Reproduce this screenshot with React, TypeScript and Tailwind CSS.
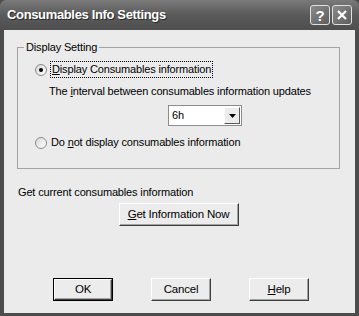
import React from 'react';

const font = { fontFamily: '"Liberation Sans", Arial, sans-serif' };

function Radio({ checked }: { checked?: boolean }) {
  return (
    <span className="w-[12px] h-[12px] rounded-full border border-[#8a8a8a] bg-gradient-to-br from-[#d8d8d8] to-white flex items-center justify-center shrink-0">
      {checked && <span className="w-[4px] h-[4px] rounded-full bg-black" />}
    </span>
  );
}

function Btn({ children, def, w = 'w-[60px]' }: { children: React.ReactNode; def?: boolean; w?: string }) {
  return (
    <div className={`${w} h-[23px] ${def ? 'border border-black' : ''}`}>
      <div className="w-full h-full border border-t-white border-l-white border-r-[#3f3f3f] border-b-[#3f3f3f] bg-[#ececec] shadow-[inset_-1px_-1px_0_#a3a3a3] flex items-center justify-center text-[11.5px] tracking-[-0.2px] text-black">
        {children}
      </div>
    </div>
  );
}

export default function App() {
  return (
    <div className="w-[359px] h-[316px] flex flex-col bg-[#4c4c4c] text-[11px] tracking-[-0.15px] text-black" style={font}>
      {/* title bar */}
      <div className="h-[30px] shrink-0 rounded-t-[6px] bg-gradient-to-b from-[#7a7a7a] via-[#5a5a5a] to-[#4e4e4e] flex items-center pl-[7px] pr-[7px]">
        <span className="text-white font-bold text-[13px] tracking-[-0.35px] [text-shadow:1px_1px_0_#2a2a2a] flex-1">
          Consumables Info Settings
        </span>
        <div className="flex gap-[2px]">
          <div className="w-[20px] h-[20px] rounded-[3px] border border-[#e0e0e0] bg-gradient-to-br from-[#8a8a8a] to-[#5e5e5e] flex items-center justify-center text-white font-bold text-[15px] leading-none">
            ?
          </div>
          <div className="w-[20px] h-[20px] rounded-[3px] border border-[#e0e0e0] bg-gradient-to-br from-[#8a8a8a] to-[#5e5e5e] flex items-center justify-center">
            <svg width="12" height="12" viewBox="0 0 12 12">
              <path d="M2 2 L10 10 M10 2 L2 10" stroke="white" strokeWidth="2.2" />
            </svg>
          </div>
        </div>
      </div>

      {/* body */}
      <div className="flex-1 flex px-[4px] pb-[3px]">
        <div className="flex-1 bg-[#ebebeb] flex flex-col">
          <fieldset className="mt-[11px] ml-[13px] w-[323px] h-[128px] border border-[#a3a3a3] pl-[17px] pt-[7px]">
            <legend className="px-[2px] ml-[-11px] leading-[13px]">Display Setting</legend>
            <div className="flex items-center gap-[3px] h-[17px]">
              <Radio checked />
              <span className="border border-dotted border-black px-[1px] leading-[15px]">
                <span className="underline">D</span>isplay Consumables information
              </span>
            </div>
            <div className="mt-[6px] leading-[14px] pl-[14px]">
              The <span className="underline">i</span>nterval between consumables information updates
            </div>
            <div className="mt-[7px] ml-[133px] w-[74px] h-[21px] border border-[#8c8c8c] bg-white flex items-center pl-[3px] pr-[1px]">
              <span className="flex-1">6h</span>
              <div className="w-[16px] h-[17px] border border-t-white border-l-white border-r-[#5a5a5a] border-b-[#5a5a5a] bg-[#ececec] flex items-center justify-center">
                <svg width="7" height="4" viewBox="0 0 7 4">
                  <path d="M0 0 H7 L3.5 4 Z" fill="black" />
                </svg>
              </div>
            </div>
            <div className="flex items-center gap-[4px] mt-[8px] h-[17px]">
              <Radio />
              <span>
                Do <span className="underline">n</span>ot display consumables information
              </span>
            </div>
          </fieldset>

          <div className="ml-[14px] mt-[16px] leading-[14px]">Get current consumables information</div>
          <div className="mt-[4px] flex justify-center">
            <div className="ml-[-2px]">
              <Btn w="w-[120px]">
                <span>
                  <span className="underline">G</span>et Information Now
                </span>
              </Btn>
            </div>
          </div>

          <div className="mt-[52px] flex pl-[49px] gap-[38px]">
            <Btn def>OK</Btn>
            <Btn>Cancel</Btn>
            <Btn>
              <span>
                <span className="underline">H</span>elp
              </span>
            </Btn>
          </div>
        </div>
      </div>
    </div>
  );
}
